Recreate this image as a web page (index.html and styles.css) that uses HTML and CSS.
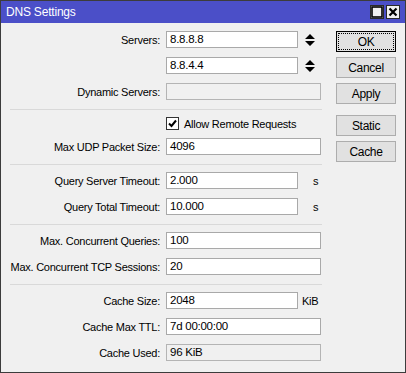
FILE: index.html
```html
<!DOCTYPE html>
<html lang="en">
<head>
  <meta charset="UTF-8" />
  <title>DNS Settings</title>
  <link rel="stylesheet" href="styles.css">
</head>
<body>
  <div class="window">
    <div class="titlebar">
      <span class="title">DNS Settings</span>
      <div class="title-buttons">
        <span class="tbtn">
          <svg width="12" height="12" viewBox="0 0 12 12"><rect x="1" y="1" width="10" height="10" fill="none" stroke="#000" stroke-width="1.6"/></svg>
        </span>
        <span class="tbtn">
          <svg width="12" height="12" viewBox="0 0 12 12"><path d="M2.5 2.5 L9.5 9.5 M9.5 2.5 L2.5 9.5" stroke="#000" stroke-width="2.2"/></svg>
        </span>
      </div>
    </div>

    <div class="content">
      <div class="form">
        <div class="row">
          <label>Servers:</label>
          <div class="field short">8.8.8.8</div>
          <span class="spin"><svg width="10" height="12" viewBox="0 0 10 12"><path d="M5 0 L10 5 L0 5 Z M0 7 L10 7 L5 12 Z" fill="#000"/></svg></span>
        </div>
        <div class="row">
          <label></label>
          <div class="field short">8.8.4.4</div>
          <span class="spin"><svg width="10" height="12" viewBox="0 0 10 12"><path d="M5 0 L10 5 L0 5 Z M0 7 L10 7 L5 12 Z" fill="#000"/></svg></span>
        </div>
        <div class="row">
          <label>Dynamic Servers:</label>
          <div class="field readonly"></div>
        </div>

        <div class="sep"></div>

        <div class="row check-row">
          <label></label>
          <span class="checkbox"><svg width="11" height="11" viewBox="0 0 11 11"><path d="M2 5.5 L4.5 8 L9 2.5" fill="none" stroke="#000" stroke-width="2"/></svg></span>
          <span class="check-label">Allow Remote Requests</span>
        </div>
        <div class="row">
          <label>Max UDP Packet Size:</label>
          <div class="field">4096</div>
        </div>

        <div class="sep"></div>

        <div class="row">
          <label>Query Server Timeout:</label>
          <div class="field short">2.000</div>
          <span class="unit">s</span>
        </div>
        <div class="row">
          <label>Query Total Timeout:</label>
          <div class="field short">10.000</div>
          <span class="unit">s</span>
        </div>

        <div class="sep"></div>

        <div class="row">
          <label>Max. Concurrent Queries:</label>
          <div class="field">100</div>
        </div>
        <div class="row">
          <label>Max. Concurrent TCP Sessions:</label>
          <div class="field">20</div>
        </div>

        <div class="sep"></div>

        <div class="row">
          <label>Cache Size:</label>
          <div class="field short">2048</div>
          <span class="unit kib">KiB</span>
        </div>
        <div class="row">
          <label>Cache Max TTL:</label>
          <div class="field">7d 00:00:00</div>
        </div>
        <div class="row">
          <label>Cache Used:</label>
          <div class="field readonly">96 KiB</div>
        </div>
      </div>

      <div class="actions">
        <button class="btn default"><span class="focus">OK</span></button>
        <button class="btn">Cancel</button>
        <button class="btn">Apply</button>
        <button class="btn group">Static</button>
        <button class="btn">Cache</button>
      </div>
    </div>
  </div>
</body>
</html>
```

FILE: styles.css
```css
body {
  margin: 0;
  font-family: "Liberation Sans", Arial, sans-serif;
  font-size: 11px;
  letter-spacing: -0.25px;
  color: #000;
}
.window {
  width: 404px;
  height: 371px;
  border: 1px solid #3c3c3c;
  background: #f0f0f0;
  display: flex;
  flex-direction: column;
}
.titlebar {
  height: 22px;
  background: #4b4fc8;
  display: flex;
  align-items: center;
  justify-content: space-between;
  padding: 0 5px 0 5px;
}
.title {
  color: #fff;
  font-size: 12px;
  letter-spacing: -0.2px;
}
.title-buttons {
  display: flex;
  gap: 2px;
}
.tbtn {
  width: 14px;
  height: 14px;
  background: #f0f0f0;
  border: 1px solid #2a2a2a;
  box-sizing: border-box;
  display: flex;
  align-items: center;
  justify-content: center;
}
.content {
  display: flex;
  padding-top: 8px;
}
.form {
  width: 321px;
  display: flex;
  flex-direction: column;
}
.row {
  display: flex;
  align-items: center;
  height: 17px;
  margin-bottom: 9px;
}
.row label {
  width: 159px;
  margin-right: 6px;
  text-align: right;
  flex-shrink: 0;
}
.field {
  width: 155px;
  height: 17px;
  box-sizing: border-box;
  background: #fff;
  border: 1px solid #a9a9a9;
  padding: 0 3px;
  line-height: 15px;
  font-size: 11.5px;
}
.field.short {
  width: 132px;
}
.field.readonly {
  background: #f0f0f0;
  border-color: #b4b4b4;
}
.spin {
  display: flex;
  margin-left: 7px;
}
.unit {
  margin-left: 15px;
}
.unit.kib {
  margin-left: 4px;
}
.sep {
  height: 1px;
  background: #d9d9d9;
  margin: 0 0 7px 9px;
}
.check-row {
  height: 13px;
  margin-bottom: 8px;
}
.checkbox {
  width: 13px;
  height: 13px;
  box-sizing: border-box;
  border: 1px solid #333;
  background: #fff;
  display: flex;
  align-items: center;
  justify-content: center;
}
.check-label {
  margin-left: 5px;
}
.actions {
  display: flex;
  flex-direction: column;
  gap: 5px;
  margin-left: 14px;
}
.btn {
  width: 60px;
  height: 21px;
  padding: 0;
  font-family: inherit;
  font-size: 12px;
  letter-spacing: -0.3px;
  background: #e1e1e1;
  border: 1px solid #adadad;
  color: #000;
}
.btn.default {
  border-color: #000;
  padding: 1px;
}
.btn .focus {
  display: flex;
  align-items: center;
  justify-content: center;
  height: 100%;
  border: 1px dotted #000;
  box-sizing: border-box;
}
.btn.group {
  margin-top: 6px;
}
```
